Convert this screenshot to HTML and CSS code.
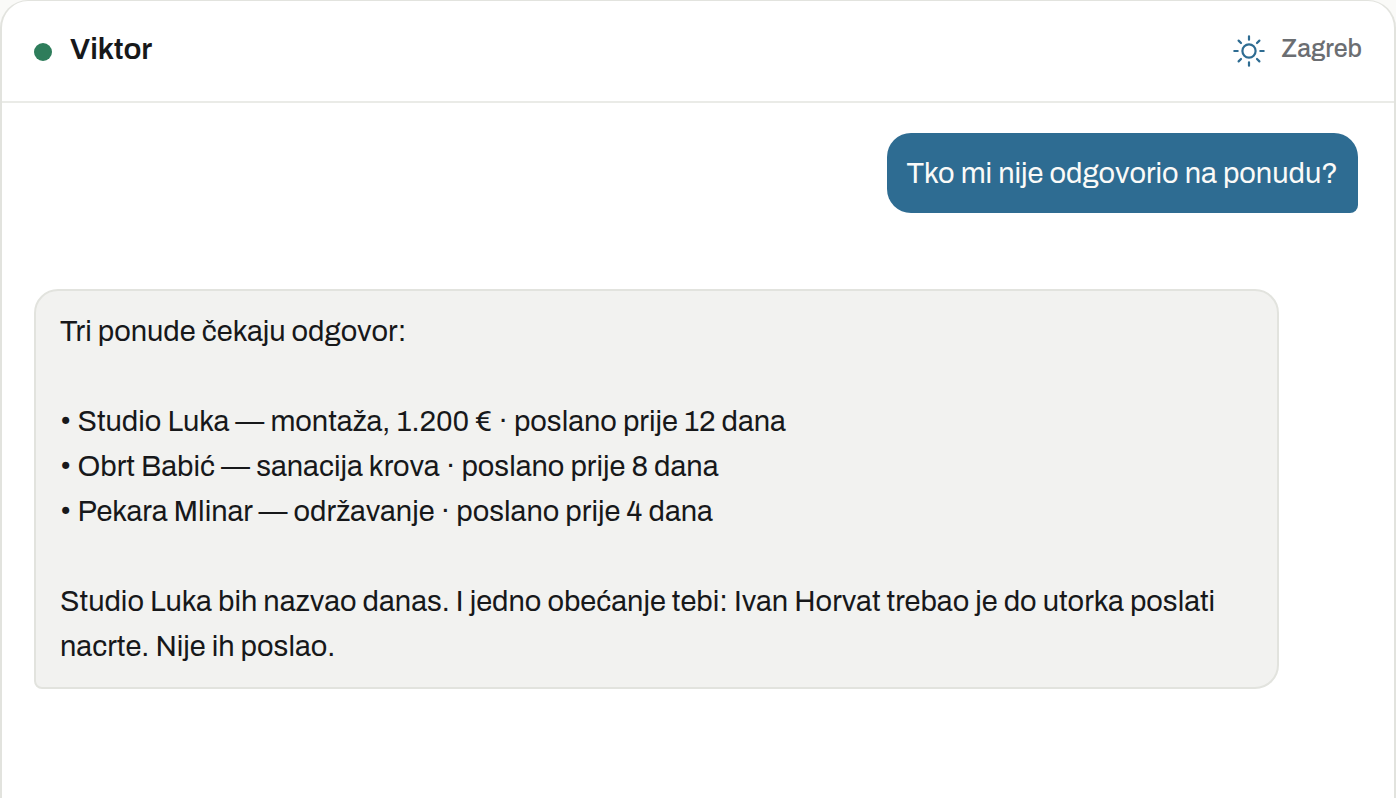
FILE: index.html
```html
<!DOCTYPE html>
<html lang="hr">
<head>
<meta charset="utf-8">
<title>Viktor</title>
<link rel="stylesheet" href="styles.css">
</head>
<body>
<main class="chat">
  <header class="chat-header">
    <div class="person">
      <span class="status-dot"></span>
      <h1 class="name">Viktor</h1>
    </div>
    <div class="place">
      <svg class="sun" viewBox="0 0 32 32" aria-hidden="true">
        <circle cx="16" cy="16" r="6.6"/>
        <path d="M16 1.3v3.4M16 27.3v3.4M1.3 16h3.4M27.3 16h3.4M5.6 5.6l2.4 2.4M24 24l2.4 2.4M26.4 5.6l-2.4 2.4M8 24l-2.4 2.4"/>
      </svg>
      <span class="city">Zagreb</span>
    </div>
  </header>
  <section class="messages">
    <p class="bubble bubble-sent">Tko mi nije odgovorio na ponudu?</p>
    <div class="bubble bubble-received">Tri ponude čekaju odgovor:

• Studio Luka — montaža, 1.200 € · poslano prije 12 dana
• Obrt Babić — sanacija krova · poslano prije 8 dana
• Pekara Mlinar — održavanje · poslano prije 4 dana

Studio Luka bih nazvao danas. I jedno obećanje tebi: Ivan Horvat trebao je do utorka poslati nacrte. Nije ih poslao.</div>
  </section>
</main>
</body>
</html>
```
FILE: styles.css
```css
* {
  box-sizing: border-box;
}

body {
  margin: 0;
  background: #fafaf8;
  color: #17181a;
  font-family: Archivo, "Liberation Sans", Arial, sans-serif;
}

.chat {
  min-height: 100vh;
  background: #ffffff;
  border: 2px solid #e2e3de;
  border-top-width: 1px;
  border-bottom: 0;
  border-radius: 28px 28px 0 0;
}

.chat-header {
  display: flex;
  align-items: center;
  justify-content: space-between;
  padding: 28px 32px 32px;
  border-bottom: 2px solid #eaebe7;
}

.person {
  display: flex;
  align-items: center;
  gap: 18px;
}

.status-dot {
  width: 18px;
  height: 18px;
  margin-top: 6px;
  border-radius: 50%;
  background: #2e7d5b;
}

.name {
  margin: 0;
  font-size: 30px;
  line-height: 40px;
  font-weight: 600;
}

.place {
  display: flex;
  align-items: center;
  gap: 16px;
  color: #6b6e72;
  font-size: 25px;
  line-height: 40px;
  font-weight: 500;
}

.sun {
  width: 32px;
  height: 32px;
  margin-top: 4px;
  fill: none;
  stroke: #2e6c92;
  stroke-width: 2.2;
  stroke-linecap: round;
}

.messages {
  display: flex;
  flex-direction: column;
  gap: 76px;
  padding: 30px 36px 30px 32px;
}

.bubble {
  margin: 0;
  font-size: 29px;
  line-height: 45px;
  white-space: pre-wrap;
}

.bubble-sent {
  align-self: flex-end;
  padding: 18px 20px 17px;
  border-radius: 24px 24px 8px 24px;
  background: #2e6c92;
  color: #fafaf8;
}

.bubble-received {
  align-self: flex-start;
  max-width: 94%;
  padding: 18px 24px 18px;
  border: 2px solid #e2e3de;
  border-radius: 24px 24px 24px 8px;
  background: #f2f2f0;
}
```
